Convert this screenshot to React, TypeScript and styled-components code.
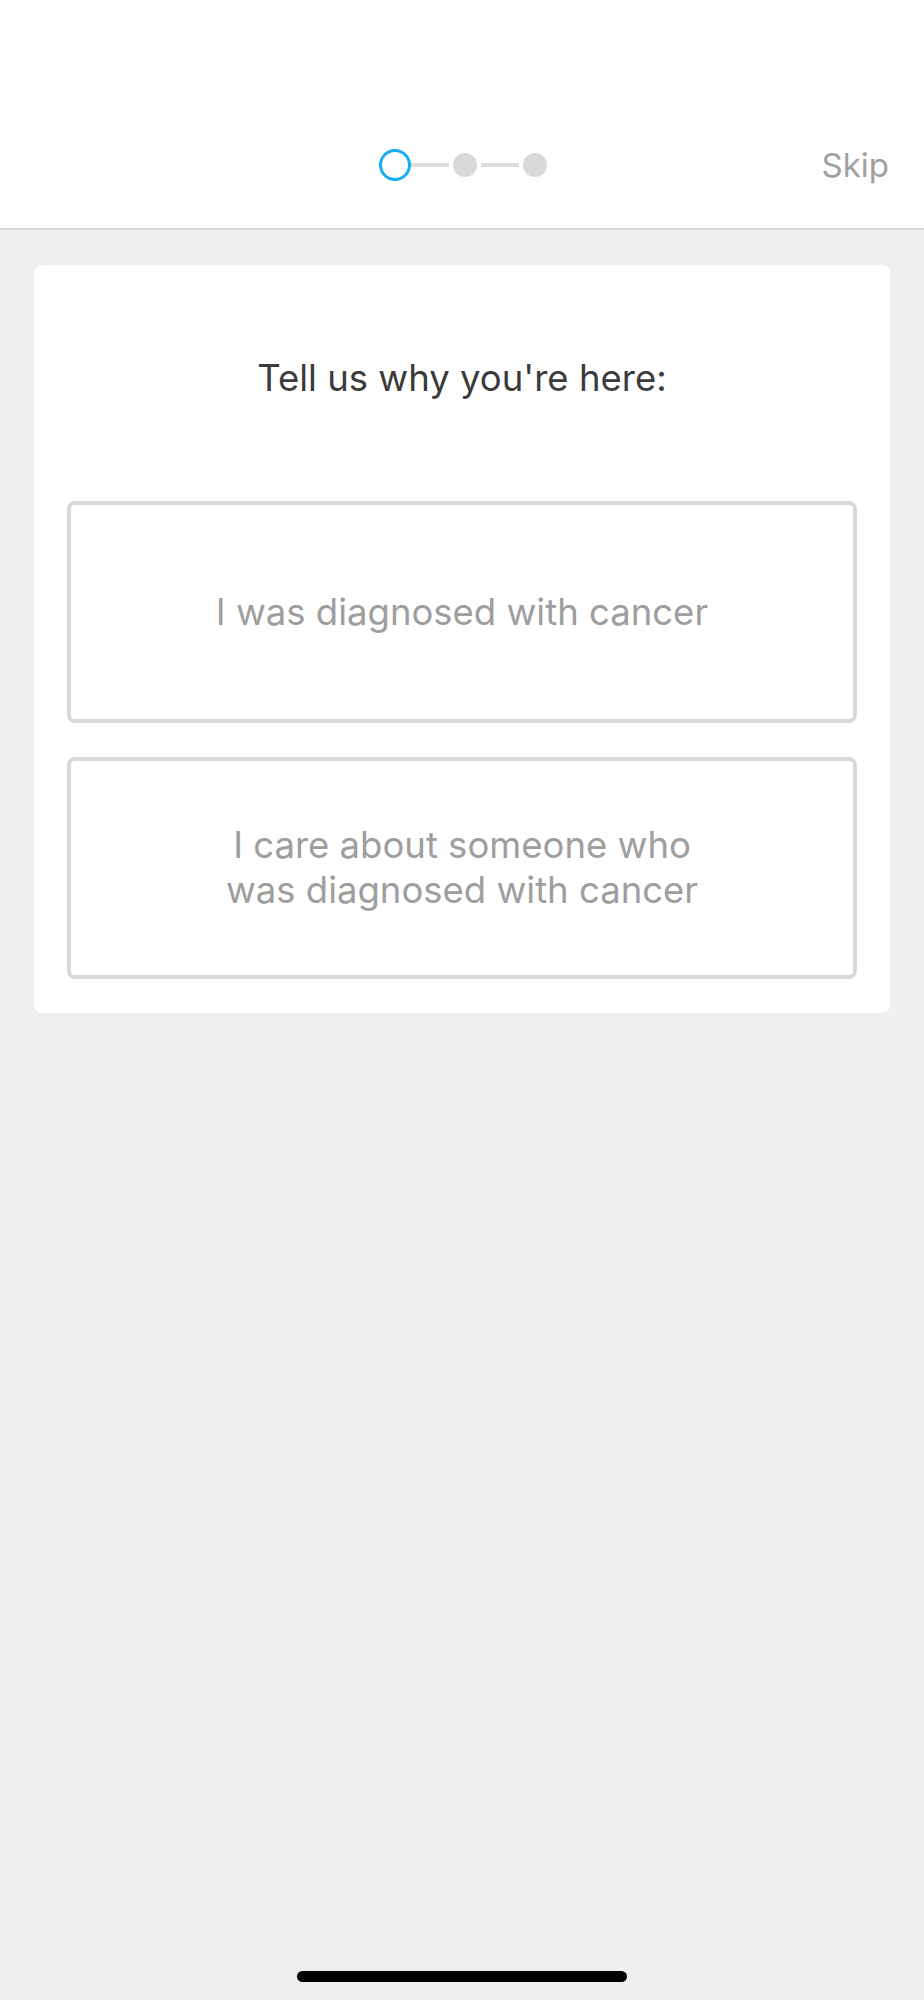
import * as React from 'react';
import styled, { createGlobalStyle } from 'styled-components';

const GlobalStyle = createGlobalStyle`
    html, body {
        margin: 0;
        padding: 0;
        background: #efefef;
    }
    body {
        font-family: Inter, "Liberation Sans", Arial, sans-serif;
        -webkit-font-smoothing: antialiased;
    }
`;

const Screen = styled.div`
    display: flex;
    flex-direction: column;
    min-height: 2000px;
    background: #efefef;
`;

const Header = styled.header`
    display: grid;
    grid-template-columns: 1fr auto 1fr;
    align-items: center;
    height: 126px;
    padding-top: 102px;
    background: #ffffff;
    border-bottom: 2px solid #d9d9d9;
`;

const Steps = styled.div`
    grid-column: 2;
    display: flex;
    align-items: center;
    margin-left: 5px;
`;

const StepSlot = styled.div`
    display: flex;
    align-items: center;
    justify-content: center;
    width: 32px;
    height: 32px;
`;

const StepDot: any = styled.span`
    box-sizing: border-box;
    display: block;
    border-radius: 50%;
    width: ${(props: any) => props.active ? 32 : 24}px;
    height: ${(props: any) => props.active ? 32 : 24}px;
    background: ${(props: any) => props.active ? '#ffffff' : '#d9d9d9'};
    border: ${(props: any) => props.active ? '3px solid #17aef4' : 'none'};
`;

const Connector = styled.span`
    display: block;
    width: 38px;
    height: 4px;
    background: #dedede;
`;

const SkipButton = styled.button`
    justify-self: end;
    margin-right: 35px;
    padding: 0;
    border: none;
    background: none;
    font-family: inherit;
    font-size: 33px;
    color: #a0a0a0;
    cursor: pointer;
`;

const Card = styled.section`
    margin: 35px 34px 0;
    padding: 90px 33px 34px;
    background: #ffffff;
    border-radius: 8px;
`;

const Title = styled.h2`
    margin: 0 0 100px;
    font-size: 36.5px;
    font-weight: 400;
    line-height: 46px;
    text-align: center;
    color: #3b3b3b;
`;

const Options = styled.div`
    display: flex;
    flex-direction: column;
    gap: 34px;
`;

const OptionButton = styled.button`
    box-sizing: border-box;
    display: flex;
    align-items: center;
    justify-content: center;
    width: 100%;
    height: 222px;
    padding: 0 20px;
    background: #ffffff;
    border: 4px solid #d9d9d9;
    border-radius: 8px;
    font-family: inherit;
    font-size: 36.5px;
    line-height: 45px;
    color: #9e9e9e;
    text-align: center;
    cursor: pointer;
`;

const HomeIndicator = styled.div`
    width: 330px;
    height: 11px;
    margin: auto auto 18px;
    border-radius: 6px;
    background: #000000;
`;

const steps = [true, false, false];

export default function App() {
    return (
        <Screen>
            <GlobalStyle />
            <Header>
                <Steps>
                    {steps.map((active, i) => (
                        <React.Fragment key={i}>
                            {i > 0 && <Connector />}
                            <StepSlot>
                                <StepDot active={active} />
                            </StepSlot>
                        </React.Fragment>
                    ))}
                </Steps>
                <SkipButton>Skip</SkipButton>
            </Header>
            <Card>
                <Title>Tell us why you're here:</Title>
                <Options>
                    <OptionButton>I was diagnosed with cancer</OptionButton>
                    <OptionButton>
                        I care about someone who<br />was diagnosed with cancer
                    </OptionButton>
                </Options>
            </Card>
            <HomeIndicator />
        </Screen>
    );
}
